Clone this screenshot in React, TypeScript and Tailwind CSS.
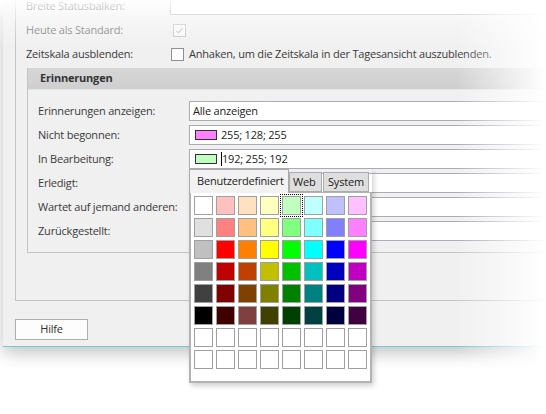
const swatches = [
  ['#ffffff', '#ffc0c0', '#ffe0c0', '#ffffc0', '#c0ffc0', '#c0ffff', '#c0c0ff', '#ffc0ff'],
  ['#e0e0e0', '#ff8080', '#ffc080', '#ffff80', '#80ff80', '#80ffff', '#8080ff', '#ff80ff'],
  ['#c0c0c0', '#ff0000', '#ff8000', '#ffff00', '#00ff00', '#00ffff', '#0000ff', '#ff00ff'],
  ['#808080', '#c00000', '#c04000', '#c0c000', '#00c000', '#00c0c0', '#0000c0', '#c000c0'],
  ['#404040', '#800000', '#804000', '#808000', '#008000', '#008080', '#000080', '#800080'],
  ['#000000', '#400000', '#804040', '#404000', '#004000', '#004040', '#000040', '#400040'],
  ['#ffffff', '#ffffff', '#ffffff', '#ffffff', '#ffffff', '#ffffff', '#ffffff', '#ffffff'],
  ['#ffffff', '#ffffff', '#ffffff', '#ffffff', '#ffffff', '#ffffff', '#ffffff', '#ffffff'],
]

const reminders: { label: string; value?: string; color?: string; caret?: boolean }[] = [
  { label: 'Erinnerungen anzeigen:', value: 'Alle anzeigen' },
  { label: 'Nicht begonnen:', value: '255; 128; 255', color: '#ff80ff' },
  { label: 'In Bearbeitung:', value: '192; 255; 192', color: '#c0ffc0', caret: true },
  { label: 'Erledigt:' },
  { label: 'Wartet auf jemand anderen:' },
  { label: 'Zurückgestellt:' },
]

function Checkbox({ checked, disabled }: { checked?: boolean; disabled?: boolean }) {
  return (
    <div
      className={`w-[13px] h-[13px] border flex items-center justify-center ${
        disabled ? 'border-[#c6c6c6] bg-[#f7f7f7]' : 'border-[#8f8f8f] bg-white'
      }`}
    >
      {checked && (
        <svg width="9" height="9" viewBox="0 0 9 9">
          <path d="M1.5 4.8 L3.6 6.9 L7.6 2" fill="none" stroke={disabled ? '#b0b0b0' : '#333'} strokeWidth="1" />
        </svg>
      )}
    </div>
  )
}

function ColorPopup() {
  return (
    <div className="absolute left-[189px] top-[169px] w-[183px] shadow-[2px_3px_5px_rgba(0,0,0,0.18)]">
      <div className="flex items-end h-[23px] text-[#222]">
        <div className="w-[100px] h-[24px] -mb-px bg-[#f2f2f2] border border-b-0 border-[#a9a9a9] pl-[7px] flex items-center relative z-10">
          Benutzerdefiniert
        </div>
        <div className="w-[33px] h-[20px] bg-[#dedede] border border-[#acacac] flex items-center pl-[3px]">Web</div>
        <div className="w-[46px] h-[20px] ml-px bg-[#dedede] border border-[#acacac] flex items-center pl-[4px]">System</div>
      </div>
      <div className="h-[191px] bg-white border-2 border-t border-[#b3b3b3] pt-[3px] pl-[3px]">
        <div className="grid grid-cols-[repeat(8,19px)] gap-[3px]">
          {swatches.flatMap((row, r) =>
            row.map((c, i) => (
              <div
                key={`${r}-${i}`}
                className={`w-[19px] h-[19px] border border-[#a0a0a0] ${
                  r === 0 && i === 4 ? 'outline-1 outline-dotted outline-black outline-offset-1' : ''
                }`}
                style={{ backgroundColor: c }}
              />
            ))
          )}
        </div>
      </div>
    </div>
  )
}

export default function App() {
  return (
    <div className="relative w-[546px] h-[414px] overflow-hidden bg-white text-[11px] tracking-[-0.2px] text-[#3a3a3a] font-['Open_Sans',sans-serif]">
      <div className="ml-[3px] h-[347px] bg-[#f0f0f0] border-b border-[#66cfd6] shadow-[0_6px_16px_rgba(0,0,0,0.24)] flex flex-col">
        {/* options panel */}
        <div className="ml-[12px] h-[301px] border-l border-b border-[#c4c4c4] flex flex-col">
          <div className="-mt-[4px] h-[19px] flex items-center ml-[10px]">
            <div className="w-[144px] pt-[2px]">Breite Statusbalken:</div>
            <div className="flex-1 h-full bg-white border border-[#abadb3]" />
          </div>
          <div className="mt-[5px] h-[20px] flex items-center ml-[10px]">
            <div className="w-[147px] text-[#777]">Heute als Standard:</div>
            <Checkbox checked disabled />
          </div>
          <div className="mt-[4px] h-[20px] flex items-center ml-[10px]">
            <div className="w-[145px]">Zeitskala ausblenden:</div>
            <Checkbox />
            <div className="ml-[5px]">Anhaken, um die Zeitskala in der Tagesansicht auszublenden.</div>
          </div>

          {/* Erinnerungen group */}
          <div className="mt-[4px] ml-[11px] border-l border-b border-[#c4c4c4]">
            <div className="h-[22px] bg-gradient-to-b from-[#d6d6d6] to-[#cfcfcf] border-b border-[#e4e4e4] flex items-center pl-[12px] font-bold text-[#333]">
              Erinnerungen
            </div>
            <div className="pt-[11px] pb-[11px] pl-[10px] flex flex-col gap-[4px]">
              {reminders.map(r => (
                <div key={r.label} className="h-[20px] flex items-center">
                  <div className="w-[151px]">{r.label}</div>
                  <div className="flex-1 h-full bg-white border border-[#abadb3] flex items-center pl-[3px] text-[#222]">
                    {r.color && (
                      <div className="w-[22px] h-[10px] border border-[#333] mr-[4px] ml-[2px]" style={{ backgroundColor: r.color }} />
                    )}
                    {r.caret && <div className="w-px h-[14px] bg-black" />}
                    {r.value}
                  </div>
                </div>
              ))}
            </div>
          </div>
        </div>

        <button className="mt-[18px] ml-[12px] w-[73px] h-[21px] bg-[#fdfdfd] border border-[#adadad] text-[#333] text-[11px]">
          Hilfe
        </button>
      </div>

      {/* fades over the screenshot edges */}
      <div className="absolute inset-x-0 top-0 h-[48px] bg-gradient-to-b from-white/90 via-white/35 to-transparent pointer-events-none" />
      <div className="absolute inset-y-0 right-0 w-[90px] bg-gradient-to-r from-transparent to-white pointer-events-none" />

      <ColorPopup />
    </div>
  )
}
